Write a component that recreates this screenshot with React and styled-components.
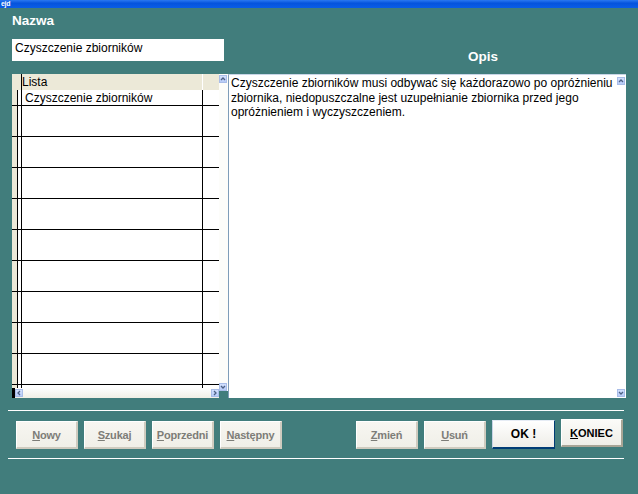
import React from 'react';
import styled, { createGlobalStyle, css } from 'styled-components';

const GlobalStyle = createGlobalStyle`
  html, body {
    margin: 0;
    padding: 0;
    background: #417d7c;
  }
  * {
    box-sizing: border-box;
  }
`;

const Window = styled.div`
  width: 638px;
  height: 494px;
  background: #417d7c;
  font-family: "Liberation Sans", Arial, sans-serif;
  overflow: hidden;
`;

const TitleBar = styled.div`
  height: 8px;
  background: linear-gradient(#2a78f0, #0553dd 40%, #0a5de6);
  color: #fff;
  font-size: 7px;
  font-weight: bold;
  line-height: 8px;
  padding-left: 1px;
  letter-spacing: -0.3px;
`;

const Top = styled.div`
  display: flex;
  height: 53px;
  padding: 5px 0 0 12px;
`;

const NameCol = styled.div`
  display: flex;
  flex-direction: column;
  width: 212px;
`;

const Heading = styled.div`
  color: #fff;
  font-weight: bold;
  font-size: 13.5px;
  line-height: 15px;
`;

const OpisHeading = styled(Heading)`
  margin: 36px 0 0 244px;
`;

const NameInput = styled.div`
  margin-top: 11px;
  height: 22px;
  background: #fff;
  font-size: 12px;
  line-height: 14px;
  padding: 2px 3px;
  color: #000;
`;

const Panels = styled.div`
  display: flex;
  height: 324px;
  margin: 13px 12px 0 12px;
`;

const ListBox = styled.div`
  display: flex;
  width: 216px;
`;

const ListGrid = styled.div`
  display: flex;
  flex-direction: column;
  width: 207px;
`;

const HeaderRow = styled.div`
  display: flex;
  height: 16px;
  background: #ece9d8;
  font-size: 12px;
  line-height: 14px;
`;

const HeadSel = styled.div`
  width: 9px;
  border-right: 1px solid #000;
  box-sizing: content-box;
`;

const HeadCell = styled.div`
  width: 180px;
  padding-top: 1px;
  border-right: 1px solid #fff;
  box-sizing: content-box;
`;

const Row = styled.div`
  display: flex;
  height: ${(p) => p.$h}px;
  background: #fff;
  border-bottom: ${(p) => (p.$last ? 'none' : '1px solid #000')};
  box-sizing: content-box;
  font-size: 12px;
  line-height: 14px;
`;

const SelCell = styled.div`
  width: 5px;
  background: #ece9d8;
`;

const GapCell = styled.div`
  width: 3px;
  border-left: 1px solid #000;
  border-right: 1px solid #000;
  box-sizing: content-box;
`;

const TextCell = styled.div`
  width: 177px;
  padding: 1px 0 0 3px;
  border-right: 1px solid #000;
  box-sizing: content-box;
  white-space: nowrap;
`;

const HScroll = styled.div`
  display: flex;
  justify-content: space-between;
  align-items: center;
  height: 10px;
  background: linear-gradient(#fefefe, #f1efe6);
  border-left: 3px solid #000;
`;

const VScroll = styled.div`
  display: flex;
  flex-direction: column;
  justify-content: space-between;
  width: 9px;
  height: 317px;
  background: #fdfdfa;
  padding: 1px 1px 0 0;
`;

const ListRight = styled.div`
  display: flex;
  flex-direction: column;
  width: 9px;
`;

const Desc = styled.div`
  display: flex;
  width: 398px;
  background: #fff;
  border-left: 1px solid #7f9db9;
  border-top: 1px solid #c7d5e6;
`;

const DescText = styled.div`
  flex: 1;
  padding: 1px 0 0 2px;
  font-size: 12px;
  line-height: 14.5px;
  color: #000;
`;

const DescScroll = styled.div`
  display: flex;
  flex-direction: column;
  justify-content: space-between;
  width: 10px;
  padding: 2px 2px 1px 1px;
`;

const ArrowBox = styled.div`
  width: 8px;
  height: 8px;
  background: linear-gradient(#d3e0fd, #b7cbf8);
  border: 1px solid #a9bde8;
  display: flex;
  align-items: center;
  justify-content: center;
`;

const Separator = styled.div`
  height: 1px;
  background: #fff;
  margin: ${(p) => p.$top}px 14px 0 8px;
`;

const ButtonBar = styled.div`
  display: flex;
  justify-content: space-between;
  align-items: flex-start;
  height: 47px;
  padding: 8px 15px 0 16px;
`;

const Group = styled.div`
  display: flex;
  align-items: flex-start;
  gap: 6px;
`;

const Button = styled.div`
  width: ${(p) => p.$w || 62}px;
  height: 28px;
  margin-top: 2px;
  display: flex;
  align-items: center;
  justify-content: center;
  background: linear-gradient(#f7f6f1, #f0efe8);
  border-right: 2px solid #cfcbbf;
  border-bottom: 2px solid #cfcbbf;
  border-top: 1px solid #fff;
  border-left: 1px solid #fff;
  font-size: 11px;
  font-weight: bold;
  letter-spacing: -0.2px;
  color: #7d7d78;
  u {
    text-decoration: underline;
  }
  ${(p) =>
    p.$variant === 'ok' &&
    css`
      height: 29px;
      margin-top: 1px;
      background: linear-gradient(#ffffff, #eeede7);
      border-right: 1px solid #003c74;
      border-bottom: 2px solid #003c74;
      border-left: 1px solid #c8d3e6;
      border-top: 1px solid #e6ecf5;
      color: #000;
      font-size: 12px;
      letter-spacing: 0;
    `}
  ${(p) =>
    p.$variant === 'end' &&
    css`
      margin-top: 0;
      color: #000;
      font-size: 11px;
      letter-spacing: 0;
      border-right: 2px solid #a8a596;
      border-bottom: 2px solid #a8a596;
      background: linear-gradient(#fbfbf8, #efeee8);
    `}
`;

const Arrow = ({ dir }) => {
  const rot = { up: 0, right: 90, down: 180, left: 270 }[dir];
  return (
    <ArrowBox>
      <svg width="6" height="6" viewBox="0 0 6 6" style={{ transform: `rotate(${rot}deg)` }}>
        <path d="M1 4 L3 2 L5 4" stroke="#4d6185" strokeWidth="1.3" fill="none" />
      </svg>
    </ArrowBox>
  );
};

const rows = [
  { h: 15, text: 'Czyszczenie zbiorników' },
  ...Array.from({ length: 9 }, () => ({ h: 30, text: '' })),
];

const App = () => {
  return (
    <Window>
      <GlobalStyle />
      <TitleBar>ejd</TitleBar>
      <Top>
        <NameCol>
          <Heading>Nazwa</Heading>
          <NameInput>Czyszczenie zbiorników</NameInput>
        </NameCol>
        <OpisHeading>Opis</OpisHeading>
      </Top>
      <Panels>
        <ListBox>
          <ListGrid>
            <HeaderRow>
              <HeadSel />
              <HeadCell>Lista</HeadCell>
            </HeaderRow>
            {rows.map((r, i) => (
              <Row key={i} $h={r.h}>
                <SelCell />
                <GapCell />
                <TextCell>{r.text}</TextCell>
              </Row>
            ))}
            <Row $h={3} $last>
              <SelCell />
              <GapCell />
              <TextCell />
            </Row>
            <HScroll>
              <Arrow dir="left" />
              <Arrow dir="right" />
            </HScroll>
          </ListGrid>
          <ListRight>
            <VScroll>
              <Arrow dir="up" />
              <Arrow dir="down" />
            </VScroll>
          </ListRight>
        </ListBox>
        <Desc>
          <DescText>
            Czyszczenie zbiorników musi odbywać się każdorazowo po opróżnieniu zbiornika,
            niedopuszczalne jest uzupełnianie zbiornika przed jego opróżnieniem i
            wyczyszczeniem.
          </DescText>
          <DescScroll>
            <Arrow dir="up" />
            <Arrow dir="down" />
          </DescScroll>
        </Desc>
      </Panels>
      <Separator $top={12} />
      <ButtonBar>
        <Group>
          <Button><span><u>N</u>owy</span></Button>
          <Button><span><u>S</u>zukaj</span></Button>
          <Button><span><u>P</u>oprzedni</span></Button>
          <Button><span><u>N</u>astępny</span></Button>
        </Group>
        <Group>
          <Button><span><u>Z</u>mień</span></Button>
          <Button><span><u>U</u>suń</span></Button>
          <Button $variant="ok" $w={63}>OK !</Button>
          <Button $variant="end"><span><u>K</u>ONIEC</span></Button>
        </Group>
      </ButtonBar>
      <Separator $top={0} />
    </Window>
  );
};

export default App;
